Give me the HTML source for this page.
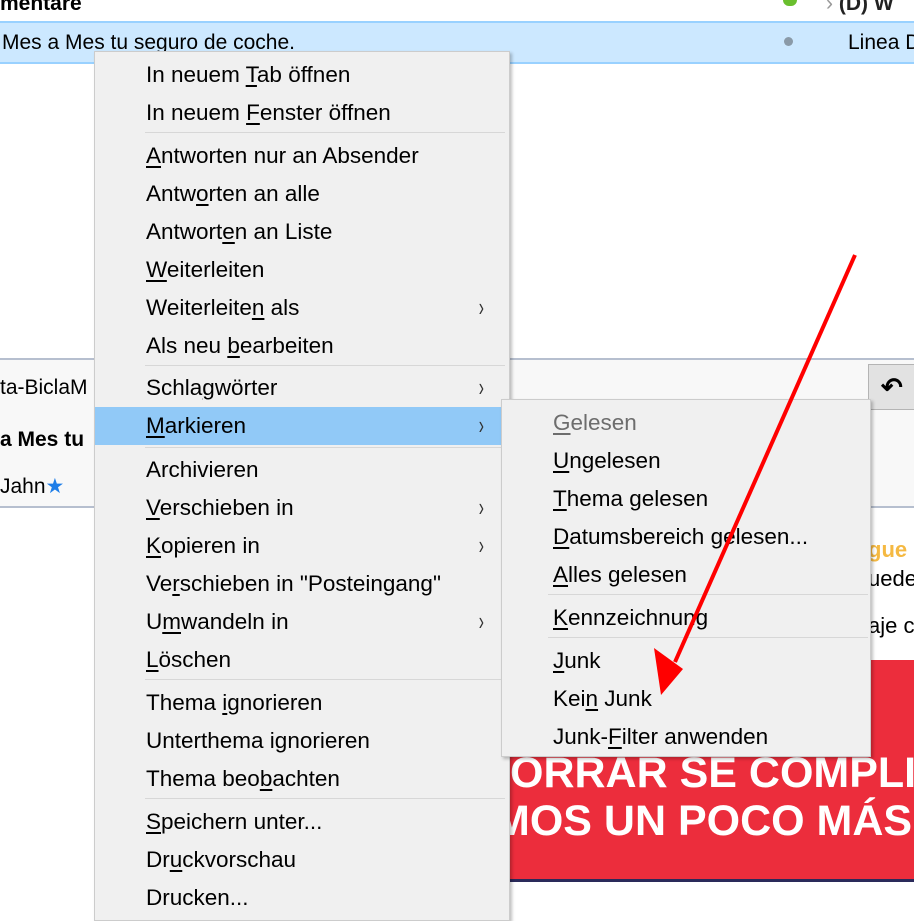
<!DOCTYPE html>
<html><head><meta charset="utf-8"><style>
*{margin:0;padding:0;box-sizing:border-box}
body{width:914px;height:906px;overflow:hidden;background:#fff;font-family:"Liberation Sans",sans-serif;position:relative;color:#000}
.abs{position:absolute;white-space:nowrap}
.menu{position:absolute;background:#f0f0f0;border:1px solid #ccc;box-shadow:2px 2px 3px rgba(0,0,0,.25)}
.it{position:absolute;left:0;right:0;height:38px;font-size:22.5px;line-height:38px;white-space:nowrap}
.it span.t{position:absolute}
.sep{position:absolute;height:1px;background:#d7d7d7}
.ar{position:absolute;font-size:26px;color:#333;line-height:36px;transform:scaleX(.6)}
u{text-decoration:underline;text-underline-offset:3px}
</style></head><body>
<div class="abs" style="left:0;top:-8px;font-weight:bold;font-size:21px">mentare</div>
<div class="abs" style="left:783px;top:0;width:14px;height:6px;border-radius:0 0 7px 7px;background:#6abf2e"></div>
<div class="abs" style="left:826px;top:-8px;font-weight:bold;font-size:21px;color:#222"><span style="color:#999;font-weight:normal">›</span> (D) W</div>
<div class="abs" style="left:0;top:21px;width:914px;height:43px;background:#cce8ff;border-top:2px solid #99d1ff;border-bottom:2px solid #99d1ff"></div>
<div class="abs" style="left:2px;top:31px;font-size:21px">Mes a Mes tu seguro de coche.</div>
<div class="abs" style="left:784px;top:37px;width:9px;height:9px;border-radius:50%;background:#8a9aa8"></div>
<div class="abs" style="left:848px;top:31px;font-size:21px">Linea D</div>
<div class="abs" style="left:0;top:358px;width:914px;height:150px;background:#f8f8f8;border-top:2px solid #b6bfcf;border-bottom:2px solid #b6bfcf"></div>
<div class="abs" style="left:0;top:376px;font-size:21px">ta-BiclaM</div>
<div class="abs" style="left:0;top:428px;font-size:21px;font-weight:bold">a Mes tu</div>
<div class="abs" style="left:0;top:474px;font-size:21px">Jahn<span style="color:#1e7ee8">★</span></div>
<div class="abs" style="left:868px;top:364px;width:50px;height:46px;background:#e2e2e2;border:1px solid #b4b4b4;font-size:26px;font-weight:bold;line-height:44px;padding-left:12px">↶</div>
<div class="abs" style="left:868px;top:537px;font-size:22px;color:#f5b942;font-weight:bold">gue</div>
<div class="abs" style="left:868px;top:566px;font-size:22px">uede</div>
<div class="abs" style="left:868px;top:613px;font-size:22px">aje c</div>
<div class="abs" style="left:508px;top:660px;width:406px;height:222px;background:#ec2d3c;border-bottom:3px solid #2a2a5a;color:#fff;font-weight:bold;font-size:43px;line-height:48px;overflow:hidden;white-space:nowrap">
<div style="margin-left:2px;margin-top:89px">ORRAR SE COMPLIC</div><div style="margin-left:-14px">MOS UN POCO MÁS</div></div>
<div class="abs" style="left:508px;top:885px;width:2px;height:21px;background:#ccc"></div>

<div class="menu" style="left:94px;top:51px;width:416px;height:870px">
<div class="it" style="top:4px"><span class="t" style="left:51px">In neuem <u>T</u>ab öffnen</span></div>
<div class="it" style="top:42px"><span class="t" style="left:51px">In neuem <u>F</u>enster öffnen</span></div>
<div class="sep" style="left:50px;right:4px;top:80px"></div>
<div class="it" style="top:85px"><span class="t" style="left:51px"><u>A</u>ntworten nur an Absender</span></div>
<div class="it" style="top:123px"><span class="t" style="left:51px">Antw<u>o</u>rten an alle</span></div>
<div class="it" style="top:161px"><span class="t" style="left:51px">Antwort<u>e</u>n an Liste</span></div>
<div class="it" style="top:199px"><span class="t" style="left:51px"><u>W</u>eiterleiten</span></div>
<div class="it" style="top:237px"><span class="t" style="left:51px">Weiterleite<u>n</u> als</span><span class="ar" style="left:382px">›</span></div>
<div class="it" style="top:275px"><span class="t" style="left:51px">Als neu <u>b</u>earbeiten</span></div>
<div class="sep" style="left:50px;right:4px;top:313px"></div>
<div class="it" style="top:317px"><span class="t" style="left:51px">Schla<u>g</u>wörter</span><span class="ar" style="left:382px">›</span></div>
<div class="it" style="top:355px;background:#91c9f7"><span class="t" style="left:51px"><u>M</u>arkieren</span><span class="ar" style="left:382px">›</span></div>
<div class="sep" style="left:50px;right:4px;top:395px"></div>
<div class="it" style="top:399px"><span class="t" style="left:51px">Archivieren</span></div>
<div class="it" style="top:437px"><span class="t" style="left:51px"><u>V</u>erschieben in</span><span class="ar" style="left:382px">›</span></div>
<div class="it" style="top:475px"><span class="t" style="left:51px"><u>K</u>opieren in</span><span class="ar" style="left:382px">›</span></div>
<div class="it" style="top:513px"><span class="t" style="left:51px">Ve<u>r</u>schieben in "Posteingang"</span></div>
<div class="it" style="top:551px"><span class="t" style="left:51px">U<u>m</u>wandeln in</span><span class="ar" style="left:382px">›</span></div>
<div class="it" style="top:589px"><span class="t" style="left:51px"><u>L</u>öschen</span></div>
<div class="sep" style="left:50px;right:4px;top:627px"></div>
<div class="it" style="top:632px"><span class="t" style="left:51px">Thema <u>i</u>gnorieren</span></div>
<div class="it" style="top:670px"><span class="t" style="left:51px">Unterthema ignorieren</span></div>
<div class="it" style="top:708px"><span class="t" style="left:51px">Thema beo<u>b</u>achten</span></div>
<div class="sep" style="left:50px;right:4px;top:746px"></div>
<div class="it" style="top:751px"><span class="t" style="left:51px"><u>S</u>peichern unter...</span></div>
<div class="it" style="top:789px"><span class="t" style="left:51px">Dr<u>u</u>ckvorschau</span></div>
<div class="it" style="top:827px"><span class="t" style="left:51px">Drucken...</span></div>
</div>

<div class="menu" style="left:501px;top:399px;width:370px;height:358px">
<div class="it" style="top:4px"><span class="t" style="left:51px;color:#6d6d6d"><u>G</u>elesen</span></div>
<div class="it" style="top:42px"><span class="t" style="left:51px"><u>U</u>ngelesen</span></div>
<div class="it" style="top:80px"><span class="t" style="left:51px"><u>T</u>hema gelesen</span></div>
<div class="it" style="top:118px"><span class="t" style="left:51px"><u>D</u>atumsbereich gelesen...</span></div>
<div class="it" style="top:156px"><span class="t" style="left:51px"><u>A</u>lles gelesen</span></div>
<div class="sep" style="left:46px;right:2px;top:194px"></div>
<div class="it" style="top:199px"><span class="t" style="left:51px"><u>K</u>ennzeichnung</span></div>
<div class="sep" style="left:46px;right:2px;top:237px"></div>
<div class="it" style="top:242px"><span class="t" style="left:51px"><u>J</u>unk</span></div>
<div class="it" style="top:280px"><span class="t" style="left:51px">Kei<u>n</u> Junk</span></div>
<div class="it" style="top:318px"><span class="t" style="left:51px">Junk-<u>F</u>ilter anwenden</span></div>
</div>

<svg class="abs" style="left:0;top:0" width="914" height="906">
<line x1="855" y1="255" x2="675" y2="662" stroke="#f00" stroke-width="4"/>
<polygon points="661,695 654,648 683,669" fill="#f00"/>
</svg>
</body></html>
